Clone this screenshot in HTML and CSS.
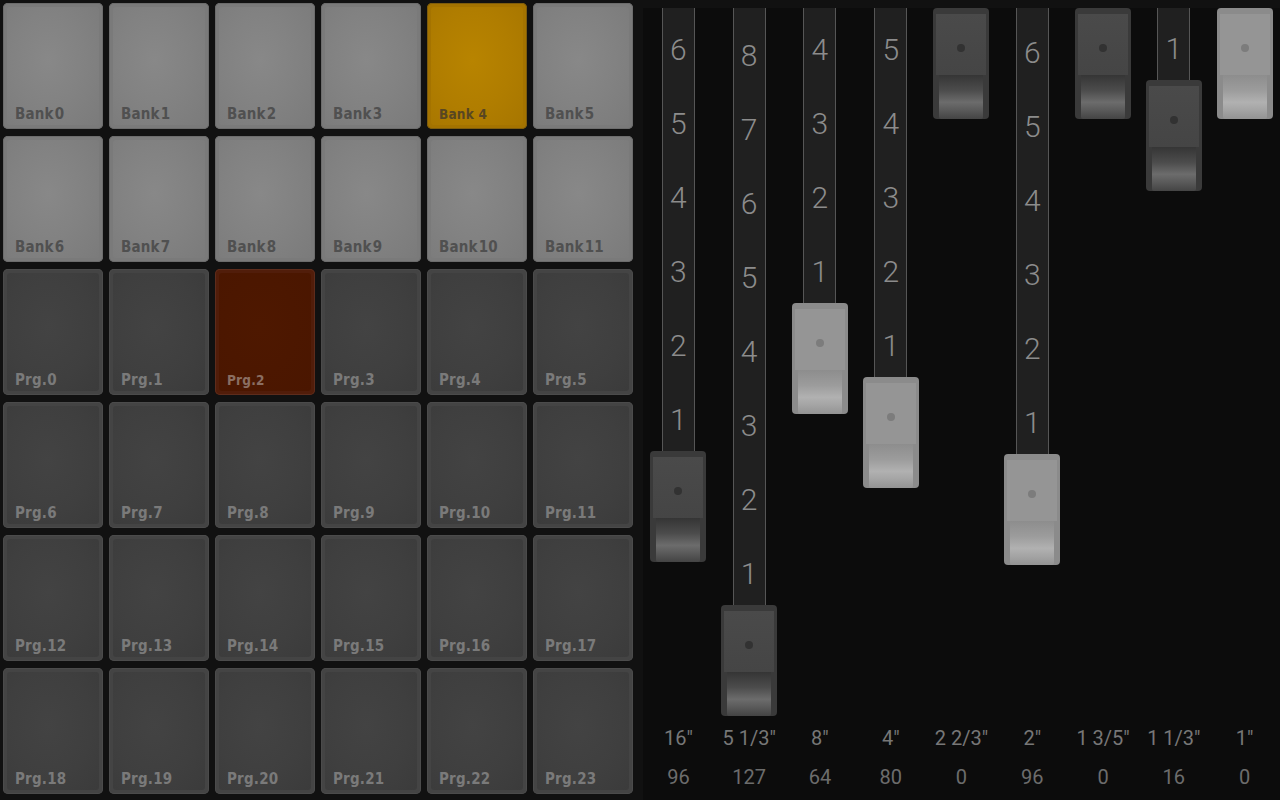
FILE: index.html
```html
<!DOCTYPE html>
<html>
<head>
<meta charset="utf-8">
<link rel="stylesheet" href="styles.css">
</head>
<body>
<div class="app">
  <div class="pads">
    <div class="pad bank"><div class="face"><span class="label">Bank 0</span></div></div>
    <div class="pad bank"><div class="face"><span class="label">Bank 1</span></div></div>
    <div class="pad bank"><div class="face"><span class="label">Bank 2</span></div></div>
    <div class="pad bank"><div class="face"><span class="label">Bank 3</span></div></div>
    <div class="pad bank on"><div class="face"><span class="label">Bank 4</span></div></div>
    <div class="pad bank"><div class="face"><span class="label">Bank 5</span></div></div>
    <div class="pad bank"><div class="face"><span class="label">Bank 6</span></div></div>
    <div class="pad bank"><div class="face"><span class="label">Bank 7</span></div></div>
    <div class="pad bank"><div class="face"><span class="label">Bank 8</span></div></div>
    <div class="pad bank"><div class="face"><span class="label">Bank 9</span></div></div>
    <div class="pad bank"><div class="face"><span class="label">Bank 10</span></div></div>
    <div class="pad bank"><div class="face"><span class="label">Bank 11</span></div></div>
    <div class="pad prg"><div class="face"><span class="label">Prg.0</span></div></div>
    <div class="pad prg"><div class="face"><span class="label">Prg.1</span></div></div>
    <div class="pad prg on"><div class="face"><span class="label">Prg.2</span></div></div>
    <div class="pad prg"><div class="face"><span class="label">Prg.3</span></div></div>
    <div class="pad prg"><div class="face"><span class="label">Prg.4</span></div></div>
    <div class="pad prg"><div class="face"><span class="label">Prg.5</span></div></div>
    <div class="pad prg"><div class="face"><span class="label">Prg.6</span></div></div>
    <div class="pad prg"><div class="face"><span class="label">Prg.7</span></div></div>
    <div class="pad prg"><div class="face"><span class="label">Prg.8</span></div></div>
    <div class="pad prg"><div class="face"><span class="label">Prg.9</span></div></div>
    <div class="pad prg"><div class="face"><span class="label">Prg.10</span></div></div>
    <div class="pad prg"><div class="face"><span class="label">Prg.11</span></div></div>
    <div class="pad prg"><div class="face"><span class="label">Prg.12</span></div></div>
    <div class="pad prg"><div class="face"><span class="label">Prg.13</span></div></div>
    <div class="pad prg"><div class="face"><span class="label">Prg.14</span></div></div>
    <div class="pad prg"><div class="face"><span class="label">Prg.15</span></div></div>
    <div class="pad prg"><div class="face"><span class="label">Prg.16</span></div></div>
    <div class="pad prg"><div class="face"><span class="label">Prg.17</span></div></div>
    <div class="pad prg"><div class="face"><span class="label">Prg.18</span></div></div>
    <div class="pad prg"><div class="face"><span class="label">Prg.19</span></div></div>
    <div class="pad prg"><div class="face"><span class="label">Prg.20</span></div></div>
    <div class="pad prg"><div class="face"><span class="label">Prg.21</span></div></div>
    <div class="pad prg"><div class="face"><span class="label">Prg.22</span></div></div>
    <div class="pad prg"><div class="face"><span class="label">Prg.23</span></div></div>
  </div>

  <div class="drawbars">
    <div class="bar">
      <div class="slot">
        <div class="rod" style="height:443px"><span>1</span><span>2</span><span>3</span><span>4</span><span>5</span><span>6</span></div>
        <div class="handle dark"><div class="top"><i class="dot"></i></div><div class="barrel"></div></div>
      </div>
      <div class="footage">16"</div>
      <div class="value">96</div>
    </div>
    <div class="bar">
      <div class="slot">
        <div class="rod" style="height:597px"><span>1</span><span>2</span><span>3</span><span>4</span><span>5</span><span>6</span><span>7</span><span>8</span></div>
        <div class="handle dark"><div class="top"><i class="dot"></i></div><div class="barrel"></div></div>
      </div>
      <div class="footage">5 1/3"</div>
      <div class="value">127</div>
    </div>
    <div class="bar">
      <div class="slot">
        <div class="rod" style="height:295px"><span>1</span><span>2</span><span>3</span><span>4</span></div>
        <div class="handle light"><div class="top"><i class="dot"></i></div><div class="barrel"></div></div>
      </div>
      <div class="footage">8"</div>
      <div class="value">64</div>
    </div>
    <div class="bar">
      <div class="slot">
        <div class="rod" style="height:369px"><span>1</span><span>2</span><span>3</span><span>4</span><span>5</span></div>
        <div class="handle light"><div class="top"><i class="dot"></i></div><div class="barrel"></div></div>
      </div>
      <div class="footage">4"</div>
      <div class="value">80</div>
    </div>
    <div class="bar">
      <div class="slot">
        <div class="handle dark"><div class="top"><i class="dot"></i></div><div class="barrel"></div></div>
      </div>
      <div class="footage">2 2/3"</div>
      <div class="value">0</div>
    </div>
    <div class="bar">
      <div class="slot">
        <div class="rod" style="height:446px"><span>1</span><span>2</span><span>3</span><span>4</span><span>5</span><span>6</span></div>
        <div class="handle light"><div class="top"><i class="dot"></i></div><div class="barrel"></div></div>
      </div>
      <div class="footage">2"</div>
      <div class="value">96</div>
    </div>
    <div class="bar">
      <div class="slot">
        <div class="handle dark"><div class="top"><i class="dot"></i></div><div class="barrel"></div></div>
      </div>
      <div class="footage">1 3/5"</div>
      <div class="value">0</div>
    </div>
    <div class="bar">
      <div class="slot">
        <div class="rod" style="height:72px"><span>1</span></div>
        <div class="handle dark"><div class="top"><i class="dot"></i></div><div class="barrel"></div></div>
      </div>
      <div class="footage">1 1/3"</div>
      <div class="value">16</div>
    </div>
    <div class="bar">
      <div class="slot">
        <div class="handle light"><div class="top"><i class="dot"></i></div><div class="barrel"></div></div>
      </div>
      <div class="footage">1"</div>
      <div class="value">0</div>
    </div>
  </div>
</div>
</body>
</html>
```

FILE: styles.css
```css
html, body {
  margin: 0;
  padding: 0;
  background: #111111;
}

.app {
  display: flex;
  width: 1280px;
  height: 800px;
  overflow: hidden;
}

/* ---------- pads ---------- */
.pads {
  width: 643px;
  flex-shrink: 0;
  box-sizing: border-box;
  padding: 3px 0 0 3px;
  display: grid;
  grid-template-columns: repeat(6, 100px);
  grid-template-rows: repeat(6, 126px);
  column-gap: 6px;
  row-gap: 7px;
}

.pad {
  display: flex;
  box-sizing: border-box;
  padding: 4px;
  border-radius: 5px;
}

.pad .face {
  flex: 1;
  display: flex;
  align-items: flex-end;
  padding: 0 0 3px 8px;
  border-radius: 3px;
}

.label {
  font-family: "DejaVu Sans Condensed", "DejaVu Sans", sans-serif;
  font-stretch: condensed;
  font-weight: bold;
  font-size: 15px;
  line-height: 16px;
  word-spacing: -4px;
  letter-spacing: 0.2px;
  white-space: nowrap;
}

.pad.bank {
  background: #7a7a7a;
  box-shadow: inset 0 0 0 1px #6c6c6c;
}
.pad.bank .face {
  background: radial-gradient(ellipse at 45% 45%, #888888 0%, #828282 50%, #7b7b7b 100%);
}
.pad.bank .label {
  color: #505050;
}

.pad.prg {
  background: #444444;
  box-shadow: inset 0 0 0 1px #4b4b4b;
}
.pad.prg .face {
  background: radial-gradient(ellipse at 45% 45%, #434343 0%, #3f3f3f 60%, #3b3b3b 100%);
}
.pad.prg .label {
  color: #7a7a7a;
}

.pad.bank.on {
  background: #a47300;
  box-shadow: inset 0 0 0 1px #7e5c0c;
}
.pad.bank.on .face {
  background: radial-gradient(ellipse at 45% 45%, #b88400 0%, #b07d00 55%, #a77600 100%);
}
.pad.bank.on .label {
  color: #584622;
  font-size: 13.5px;
  word-spacing: 0;
}

.pad.prg.on {
  background: #511d0a;
  box-shadow: inset 0 0 0 1px #5d2c1c;
}
.pad.prg.on .face {
  background: radial-gradient(ellipse at 45% 45%, #4e1800 0%, #4a1600 100%);
}
.pad.prg.on .label {
  color: #8a6e62;
  font-size: 13.5px;
}

/* ---------- drawbars ---------- */
.drawbars {
  flex: 1;
  margin-top: 8px;
  background: #0c0c0c;
  display: grid;
  grid-template-columns: repeat(9, 1fr);
  font-family: Roboto, "Liberation Sans", sans-serif;
}

.bar {
  display: flex;
  flex-direction: column;
  align-items: center;
}

.slot {
  height: 712px;
  display: flex;
  flex-direction: column;
  align-items: center;
}

.rod {
  width: 33px;
  flex-shrink: 0;
  box-sizing: border-box;
  border-left: 1px solid #565656;
  border-right: 1px solid #565656;
  background: #202020;
  overflow: hidden;
  display: flex;
  flex-direction: column-reverse;
  gap: 10px;
}

.rod span {
  flex-shrink: 0;
  height: 64px;
  display: flex;
  align-items: center;
  justify-content: center;
  font-size: 30px;
  font-weight: 300;
  color: #8c8c8c;
}

.handle {
  width: 56px;
  height: 111px;
  flex-shrink: 0;
  border-radius: 4px;
  display: flex;
  flex-direction: column;
  align-items: center;
}

.handle .top {
  margin-top: 6px;
  width: 50px;
  height: 61px;
  flex-shrink: 0;
  display: flex;
  align-items: center;
  justify-content: center;
}

.handle .dot {
  width: 8px;
  height: 8px;
  border-radius: 50%;
  margin-top: 7px;
}

.handle .barrel {
  width: 44px;
  flex: 1;
  border-radius: 0 0 2px 2px;
}

.handle.dark {
  background: #3a3a3a;
}
.handle.dark .top {
  background: linear-gradient(#4a4a4a, #454545);
}
.handle.dark .dot {
  background: #323232;
}
.handle.dark .barrel {
  background: linear-gradient(#353535 0%, #4c4c4c 35%, #6c6c6c 62%, #5a5a5a 80%, #444444 100%);
}

.handle.light {
  background: #8b8b8b;
}
.handle.light .top {
  background: #959595;
}
.handle.light .dot {
  background: #7c7c7c;
}
.handle.light .barrel {
  background: linear-gradient(#8d8d8d 0%, #9c9c9c 35%, #b1b1b1 62%, #a4a4a4 80%, #939393 100%);
}

.footage {
  margin-top: 6px;
  line-height: 24px;
  font-size: 20px;
  color: #777777;
  white-space: nowrap;
}

.value {
  margin-top: 15px;
  line-height: 24px;
  font-size: 20px;
  color: #6c6c6c;
}
```
